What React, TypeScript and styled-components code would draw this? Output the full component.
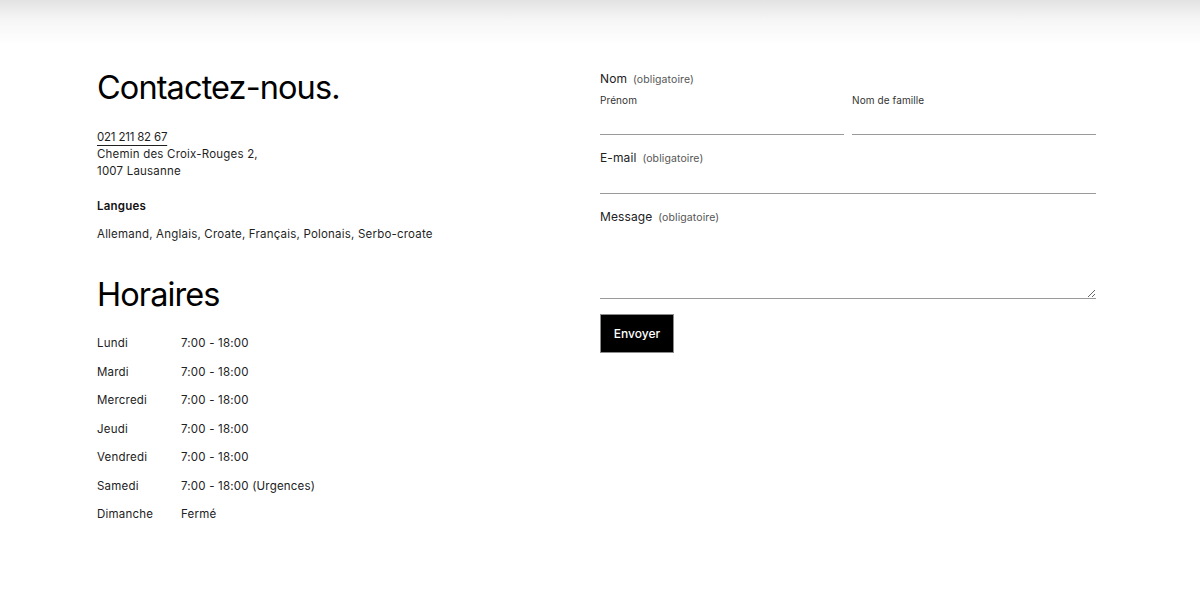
import React from "react";
import styled, { createGlobalStyle } from "styled-components";

const GlobalStyle = createGlobalStyle`
  html, body {
    margin: 0;
    padding: 0;
    background: #ffffff;
  }
  body {
    font-family: Inter, "Liberation Sans", sans-serif;
    color: #1a1a1a;
  }
`;

const Page = styled.div`
  width: 1200px;
  min-height: 603px;
  background: #ffffff;
`;

const HeaderShade = styled.div`
  height: 45px;
  background: linear-gradient(#e3e3e3, #f6f6f6 45%, #ffffff);
`;

const Section = styled.section`
  display: grid;
  grid-template-columns: 496px 496px;
  column-gap: 7px;
  width: 999px;
  margin-left: 97px;
  padding-top: 22px;
`;

const Column = styled.div`
  display: flex;
  flex-direction: column;
`;

const Heading = styled.h2<{ $gap?: number }>`
  margin: ${(p) => p.$gap ?? 0}px 0 0;
  font-family: Inter, "Liberation Sans", sans-serif;
  font-weight: 400;
  font-size: 32.5px;
  line-height: 41px;
  letter-spacing: -0.9px;
  color: #000;
`;

const Body = styled.div<{ $gap?: number }>`
  margin-top: ${(p) => p.$gap ?? 0}px;
  font-size: 11.5px;
  line-height: 17px;
  letter-spacing: 0.2px;
  color: #1f1f1f;
`;

const Phone = styled.a`
  color: inherit;
  letter-spacing: -0.2px;
  text-decoration: underline;
  text-underline-offset: 4px;
  text-decoration-thickness: 1px;
`;

const Strong = styled.div<{ $gap?: number }>`
  margin-top: ${(p) => p.$gap ?? 0}px;
  font-size: 11.5px;
  line-height: 17px;
  letter-spacing: 0.2px;
  font-weight: 600;
  color: #111;
`;

const Hours = styled.div`
  display: grid;
  grid-template-columns: 84px auto;
  row-gap: 11.5px;
  margin-top: 20px;
  font-size: 11.5px;
  line-height: 17px;
  letter-spacing: 0.2px;
  color: #222;
`;

const Form = styled.form`
  display: flex;
  flex-direction: column;
  padding-top: 4px;
`;

const Field = styled.div<{ $gap?: number }>`
  margin-top: ${(p) => p.$gap ?? 0}px;
  display: flex;
  flex-direction: column;
`;

const Legend = styled.div`
  font-size: 12px;
  line-height: 16px;
  letter-spacing: 0.1px;
  color: #222;
`;

const Req = styled.span`
  margin-left: 6px;
  font-size: 10.5px;
  color: #555;
`;

const Pair = styled.div`
  display: grid;
  grid-template-columns: 1fr 1fr;
  column-gap: 8px;
  margin-top: 5px;
`;

const SubLabel = styled.label`
  font-size: 10px;
  line-height: 14px;
  letter-spacing: 0.1px;
  color: #333;
`;

const Line = styled.input<{ $h: number }>`
  box-sizing: border-box;
  width: 100%;
  height: ${(p) => p.$h}px;
  margin: 0;
  padding: 0;
  border: none;
  border-bottom: 1px solid #9a9a9a;
  background: transparent;
  outline: none;
  font: inherit;
`;

const Area = styled.textarea`
  box-sizing: border-box;
  display: block;
  width: 100%;
  height: 73px;
  margin: 0;
  padding: 0;
  border: none;
  border-bottom: 1px solid #9a9a9a;
  background: transparent;
  outline: none;
  resize: vertical;
  font: inherit;
`;

const Submit = styled.button`
  align-self: flex-start;
  box-sizing: border-box;
  width: 74px;
  height: 39px;
  margin-top: 15px;
  border: 1px solid #8c8c8c;
  background: #000;
  color: #fff;
  font-family: Inter, "Liberation Sans", sans-serif;
  font-size: 12px;
  font-weight: 500;
  cursor: pointer;
`;

const days: [string, string][] = [
  ["Lundi", "7:00 - 18:00"],
  ["Mardi", "7:00 - 18:00"],
  ["Mercredi", "7:00 - 18:00"],
  ["Jeudi", "7:00 - 18:00"],
  ["Vendredi", "7:00 - 18:00"],
  ["Samedi", "7:00 - 18:00 (Urgences)"],
  ["Dimanche", "Fermé"],
];

const App = () => {
  return (
    <Page>
      <GlobalStyle />
      <HeaderShade />
      <Section>
        <Column>
          <Heading>Contactez-nous.</Heading>
          <Body $gap={21}>
            <Phone href="#">021 211 82 67</Phone>
            <br />
            Chemin des Croix-Rouges 2,
            <br />
            1007 Lausanne
          </Body>
          <Strong $gap={18}>Langues</Strong>
          <Body $gap={11}>
            Allemand, Anglais, Croate, Français, Polonais, Serbo-croate
          </Body>
          <Heading $gap={31}>Horaires</Heading>
          <Hours>
            {days.map(([d, t]) => (
              <React.Fragment key={d}>
                <span>{d}</span>
                <span>{t}</span>
              </React.Fragment>
            ))}
          </Hours>
        </Column>
        <Column>
          <Form onSubmit={(e) => e.preventDefault()}>
            <Field>
              <Legend>
                Nom<Req>(obligatoire)</Req>
              </Legend>
              <Pair>
                <Field>
                  <SubLabel>Prénom</SubLabel>
                  <Line $h={28} />
                </Field>
                <Field>
                  <SubLabel>Nom de famille</SubLabel>
                  <Line $h={28} />
                </Field>
              </Pair>
            </Field>
            <Field $gap={15}>
              <Legend>
                E-mail<Req>(obligatoire)</Req>
              </Legend>
              <Line $h={27} type="email" />
            </Field>
            <Field $gap={15}>
              <Legend>
                Message<Req>(obligatoire)</Req>
              </Legend>
              <Area />
            </Field>
            <Submit type="submit">Envoyer</Submit>
          </Form>
        </Column>
      </Section>
    </Page>
  );
};

export default App;
